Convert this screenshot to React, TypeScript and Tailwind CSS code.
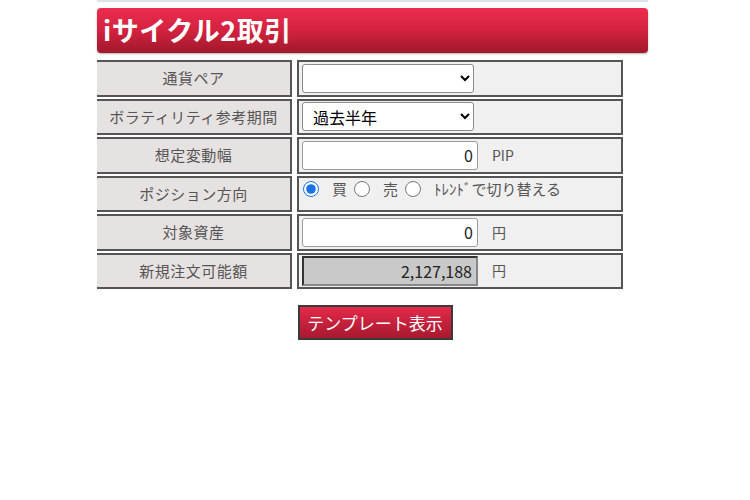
import { useState } from "react";

const font = { fontFamily: '"Noto Sans CJK JP", "Noto Sans", sans-serif' };

type RowProps = { label: string; children: React.ReactNode; top?: boolean };

function Row({ label, children, top }: RowProps) {
  return (
    <div className="flex h-[36.5px] gap-[5px]">
      <div className="flex w-[195px] items-center justify-center border-y-2 border-r-2 border-[#555] bg-[#e7e2e2] text-[15px] tracking-[0.5px] text-[#555]">
        {label}
      </div>
      <div
        className={
          "flex w-[326px] gap-[14px] border-2 border-[#555] bg-[#f0f0f0] pl-[3px] " +
          (top ? "items-start pt-0" : "items-center")
        }
      >
        {children}
      </div>
    </div>
  );
}

function Radio({ label, checked, onChange }: { label: string; checked: boolean; onChange: () => void }) {
  return (
    <label className="flex items-center gap-[13px]">
      <input
        type="radio"
        name="side"
        checked={checked}
        onChange={onChange}
        className="h-[16px] w-[16px] accent-[#1a73e8]"
      />
      {label}
    </label>
  );
}

export default function App() {
  const [side, setSide] = useState("buy");

  return (
    <div className="h-[500px] w-[750px] bg-white" style={font}>
      <div className="ml-[97px] w-[551px]">
        <div className="h-[2px] bg-[#dde3e8]" />
        <div className="mt-[6px] flex h-[45px] items-center rounded-[4px] bg-gradient-to-b from-[#ec2c4e] via-[#d3223f] to-[#a1182c] pl-[6px] shadow-[0_1px_2px_rgba(0,0,0,0.3)]">
          <span className="text-[27px] font-bold tracking-[0.5px] text-white">iサイクル2取引</span>
        </div>

        <div className="mt-[7px] flex flex-col gap-[2px]">
          <Row label="通貨ペア">
            <select className="h-[29px] w-[172px] rounded-[3px] border border-[#8a8a8a] bg-white px-[6px] text-[16px] text-black">
              <option></option>
            </select>
          </Row>
          <Row label="ボラティリティ参考期間">
            <select className="h-[29px] w-[172px] rounded-[3px] border border-[#8a8a8a] bg-white px-[6px] text-[16px] text-black" defaultValue="half">
              <option value="half">過去半年</option>
            </select>
          </Row>
          <Row label="想定変動幅">
            <input
              readOnly
              value="0"
              className="h-[29px] w-[176px] rounded-[3px] border border-[#9a9a9a] bg-white pr-[4px] text-right text-[16px] text-[#222]"
            />
            <span className="text-[14px] text-[#555]">PIP</span>
          </Row>
          <Row label="ポジション方向" top>
            <div className="flex items-center gap-[7px] pl-[1px] text-[15px] text-[#555]">
              <Radio label="買" checked={side === "buy"} onChange={() => setSide("buy")} />
              <Radio label="売" checked={side === "sell"} onChange={() => setSide("sell")} />
              <Radio label="ﾄﾚﾝﾄﾞで切り替える" checked={side === "trend"} onChange={() => setSide("trend")} />
            </div>
          </Row>
          <Row label="対象資産">
            <input
              readOnly
              value="0"
              className="h-[29px] w-[176px] rounded-[3px] border border-[#9a9a9a] bg-white pr-[4px] text-right text-[16px] text-[#222]"
            />
            <span className="text-[14px] text-[#555]">円</span>
          </Row>
          <Row label="新規注文可能額">
            <input
              readOnly
              value="2,127,188"
              className="h-[30px] w-[176px] border-2 border-t-[#333] border-l-[#333] border-r-[#888] border-b-[#888] bg-[#c9c9c9] pr-[4px] text-right text-[16px] text-[#222]"
            />
            <span className="text-[14px] text-[#555]">円</span>
          </Row>
        </div>
      </div>

      <div className="mt-[16px] flex justify-center">
        <button
          type="button"
          className="h-[35px] w-[155px] border-2 border-[#3a3a3a] bg-gradient-to-b from-[#e42a4a] to-[#a8192f] text-[17px] text-white"
        >
          テンプレート表示
        </button>
      </div>
    </div>
  );
}
